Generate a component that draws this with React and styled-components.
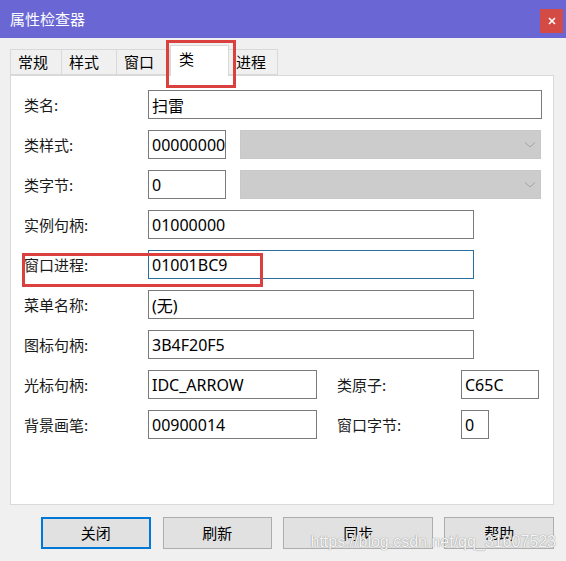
import React from 'react';
import styled, { createGlobalStyle } from 'styled-components';

const GlobalStyle = createGlobalStyle`
    html, body {
        margin: 0;
        padding: 0;
        background: #f0f0f0;
    }
    * {
        box-sizing: border-box;
    }
`

const Window = styled.div`
    position: relative;
    width: 566px;
    height: 561px;
    display: flex;
    flex-direction: column;
    background: #f0f0f0;
    font-family: "Noto Sans", "Noto Sans CJK SC", sans-serif;
    color: #000;
    overflow: hidden;
`

const TitleBar = styled.div`
    height: 38px;
    flex-shrink: 0;
    display: flex;
    justify-content: space-between;
    align-items: flex-start;
    background: #6a67d5;
    padding-left: 10px;
`

const Title = styled.span`
    font-family: "Noto Sans CJK SC", sans-serif;
    font-size: 15px;
    line-height: 38px;
    color: #ffffff;
`

const CloseButton = styled.div`
    width: 23px;
    height: 24px;
    margin: 9px 3px 0 0;
    background: #d44a44;
    color: #ffffff;
    display: flex;
    justify-content: center;
    align-items: center;
`

const Body = styled.div`
    display: flex;
    flex-direction: column;
    padding: 11px 12px 0 10px;
`

const TabStrip = styled.div`
    display: flex;
    align-items: flex-end;
    height: 26px;
    position: relative;
    z-index: 1;
`

const Tab = styled.div`
    width: ${p => p.$width}px;
    height: ${p => (p.$active ? 31 : 26)}px;
    margin-bottom: ${p => (p.$active ? -1 : 0)}px;
    padding: ${p => (p.$active ? '3px' : '2px')} 0 0 ${p => (p.$active ? 8 : 7)}px;
    background: ${p => (p.$active ? '#ffffff' : '#f0f0f0')};
    border: 1px solid #d9d9d9;
    border-left-width: ${p => (p.$first || p.$active ? 1 : 0)}px;
    border-bottom: ${p => (p.$active ? 'none' : '1px solid #d9d9d9')};
    font-family: "Noto Sans CJK SC", sans-serif;
    font-size: 15px;
    line-height: 20px;
    white-space: nowrap;
`

const Panel = styled.div`
    height: 430px;
    background: #ffffff;
    border: 1px solid #d9d9d9;
    padding: 14px 12px 0 13px;
    display: flex;
    flex-direction: column;
    gap: 11px;
`

const Row = styled.div`
    display: flex;
    align-items: center;
    height: 29px;
`

const Label = styled.span`
    width: ${p => p.$width || 124}px;
    margin-left: ${p => p.$offset || 0}px;
    flex-shrink: 0;
    font-family: "Noto Sans CJK SC", sans-serif;
    font-size: 15px;
    color: #1a1a1a;
`

const Field = styled.div`
    width: ${p => p.$width}px;
    height: 29px;
    flex-shrink: 0;
    border: 1px solid ${p => (p.$focused ? '#2b6f9e' : '#7a7a7a')};
    padding-left: 3px;
    display: flex;
    align-items: center;
    font-size: 16px;
    white-space: nowrap;
    overflow: hidden;
`

const Combo = styled.div`
    width: 301px;
    height: 29px;
    margin-left: 14px;
    background: #cccccc;
    border: 1px solid #c8c8c8;
    display: flex;
    justify-content: flex-end;
    align-items: center;
    padding-right: 4px;
`

const ButtonBar = styled.div`
    display: flex;
    margin-top: 12px;
    padding-left: 31px;
`

const Button = styled.div`
    width: ${p => p.$width || 110}px;
    height: 32px;
    margin-left: ${p => p.$gap || 0}px;
    background: #e1e1e1;
    border: ${p => (p.$default ? '2px solid #0078d7' : '1px solid #adadad')};
    display: flex;
    justify-content: center;
    align-items: center;
    padding-bottom: 2px;
    font-family: "Noto Sans CJK SC", sans-serif;
    font-size: 15px;
`

const Annotation = styled.div`
    position: absolute;
    left: ${p => p.$x}px;
    top: ${p => p.$y}px;
    width: ${p => p.$w}px;
    height: ${p => p.$h}px;
    border: 3px solid #d9403e;
    pointer-events: none;
    z-index: 5;
`

const Watermark = styled.div`
    position: absolute;
    right: 10px;
    top: 533px;
    font-family: "Liberation Sans", sans-serif;
    font-size: 16px;
    color: rgba(255, 255, 255, 0.92);
    text-shadow: 0 0 1px #9a9a9a, 0 0 1px #9a9a9a;
    z-index: 6;
`

const Chevron = () => (
    <svg width="12" height="8" viewBox="0 0 12 8">
        <polyline points="1,1.5 6,6 11,1.5" fill="none" stroke="#a4a4a4" strokeWidth="1" />
    </svg>
)

const CloseIcon = () => (
    <svg width="10" height="10" viewBox="0 0 10 10">
        <path d="M2 2 L8 8 M8 2 L2 8" stroke="#ffffff" strokeWidth="1.6" />
    </svg>
)

const tabs = [
    { name: '常规', width: 52 },
    { name: '样式', width: 55 },
    { name: '窗口', width: 53 },
    { name: '类', width: 59, active: true },
    { name: '进程', width: 49 },
]

const App = () => {
    return (
        <Window>
            <GlobalStyle />
            <TitleBar>
                <Title>属性检查器</Title>
                <CloseButton><CloseIcon /></CloseButton>
            </TitleBar>
            <Body>
                <TabStrip>
                    {tabs.map((t, i) => (
                        <Tab key={t.name} $width={t.width} $active={t.active} $first={i === 0}>{t.name}</Tab>
                    ))}
                </TabStrip>
                <Panel>
                    <Row>
                        <Label>类名:</Label>
                        <Field $width={394}>扫雷</Field>
                    </Row>
                    <Row>
                        <Label>类样式:</Label>
                        <Field $width={78}>00000000</Field>
                        <Combo><Chevron /></Combo>
                    </Row>
                    <Row>
                        <Label>类字节:</Label>
                        <Field $width={78}>0</Field>
                        <Combo><Chevron /></Combo>
                    </Row>
                    <Row>
                        <Label>实例句柄:</Label>
                        <Field $width={326}>01000000</Field>
                    </Row>
                    <Row>
                        <Label>窗口进程:</Label>
                        <Field $width={326} $focused>01001BC9</Field>
                    </Row>
                    <Row>
                        <Label>菜单名称:</Label>
                        <Field $width={326}>(无)</Field>
                    </Row>
                    <Row>
                        <Label>图标句柄:</Label>
                        <Field $width={326}>3B4F20F5</Field>
                    </Row>
                    <Row>
                        <Label>光标句柄:</Label>
                        <Field $width={169}>IDC_ARROW</Field>
                        <Label $offset={20}>类原子:</Label>
                        <Field $width={78}>C65C</Field>
                    </Row>
                    <Row>
                        <Label>背景画笔:</Label>
                        <Field $width={169}>00900014</Field>
                        <Label $offset={20}>窗口字节:</Label>
                        <Field $width={28}>0</Field>
                    </Row>
                </Panel>
                <ButtonBar>
                    <Button $default>关闭</Button>
                    <Button $gap={12}>刷新</Button>
                    <Button $gap={11} $width={151}>同步</Button>
                    <Button $gap={11}>帮助</Button>
                </ButtonBar>
            </Body>
            <Annotation $x={166} $y={40} $w={70} $h={48} />
            <Annotation $x={22} $y={253} $w={241} $h={34} />
            <Watermark>https://blog.csdn.net/qq_31607523</Watermark>
        </Window>
    );
};

export default App;
